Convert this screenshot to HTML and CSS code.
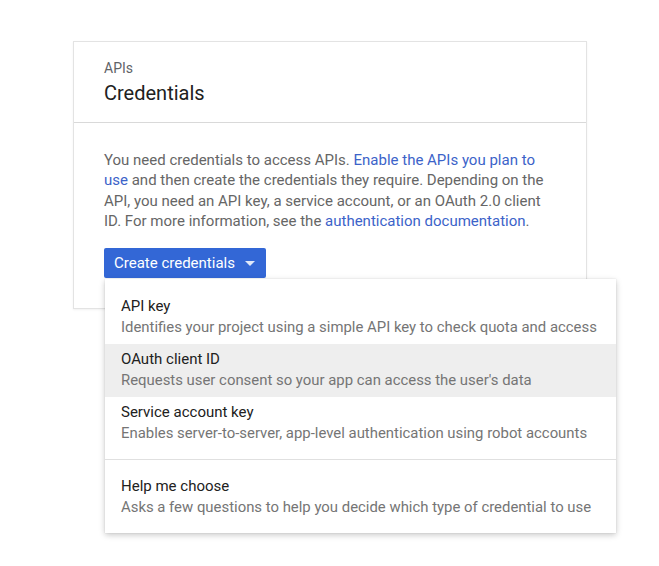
FILE: index.html
```html
<!DOCTYPE html>
<html>
<head>
<meta charset="utf-8">
<link rel="stylesheet" href="styles.css">
</head>
<body>
<div class="card">
  <div class="card-head">
    <div class="eyebrow">APIs</div>
    <div class="title">Credentials</div>
  </div>
  <div class="card-body">
    <p class="intro">You need credentials to access APIs. <a href="#">Enable the APIs you plan to use</a> and then create the credentials they require. Depending on the API, you need an API key, a service account, or an OAuth 2.0 client ID. For more information, see the <a href="#">authentication documentation</a>.</p>
    <div class="dropdown">
      <button class="btn">Create credentials <span class="caret"></span></button>
      <div class="menu">
        <div class="item">
          <div class="item-title">API key</div>
          <div class="item-desc">Identifies your project using a simple API key to check quota and access</div>
        </div>
        <div class="item active">
          <div class="item-title">OAuth client ID</div>
          <div class="item-desc">Requests user consent so your app can access the user's data</div>
        </div>
        <div class="item">
          <div class="item-title">Service account key</div>
          <div class="item-desc">Enables server-to-server, app-level authentication using robot accounts</div>
        </div>
        <div class="sep"></div>
        <div class="item">
          <div class="item-title">Help me choose</div>
          <div class="item-desc">Asks a few questions to help you decide which type of credential to use</div>
        </div>
      </div>
    </div>
  </div>
</div>
</body>
</html>
```
FILE: styles.css
```css
html, body {
  margin: 0;
  padding: 0;
  background: #ffffff;
}
html {
  min-height: 566px;
}
body {
  min-height: 566px;
  box-sizing: border-box;
  font-family: Roboto, "Liberation Sans", Arial, sans-serif;
  padding: 41px 0 0 73px;
}
.card {
  width: 512px;
  height: 266px;
  border: 1px solid #e3e3e3;
  box-shadow: 0 1px 2px rgba(0,0,0,0.06);
  background: #fff;
}
.card-head {
  height: 81px;
  padding: 0 30px;
  border-bottom: 1px solid #d9d9d9;
  box-sizing: border-box;
}
.eyebrow {
  font-size: 14px;
  line-height: 16px;
  color: #5f6368;
  padding-top: 18px;
}
.title {
  font-size: 20px;
  line-height: 26px;
  color: #212121;
  padding-top: 4px;
}
.card-body {
  padding: 27px 30px 0;
}
.intro {
  margin: 0;
  font-size: 15px;
  line-height: 20.3px;
  color: #666666;
}
.intro a {
  color: #3c63c9;
  text-decoration: none;
}
.dropdown {
  position: relative;
  margin-top: 17px;
}
.btn {
  display: flex;
  align-items: center;
  height: 30px;
  width: 162px;
  padding: 0 0 0 10px;
  border: none;
  border-radius: 2px;
  background: #3367d6;
  color: #fff;
  font-family: inherit;
  font-size: 15px;
  cursor: pointer;
}
.caret {
  display: inline-block;
  margin-left: 10px;
  width: 0;
  height: 0;
  border-left: 5px solid transparent;
  border-right: 5px solid transparent;
  border-top: 5px solid #ffffff;
  opacity: 0.85;
}
.menu {
  position: absolute;
  left: 1px;
  top: 31px;
  width: 511px;
  padding: 12px 0 9px;
  background: #fff;
  box-shadow: 0 2px 6px rgba(0,0,0,0.22), 0 0 1px rgba(0,0,0,0.15);
  box-sizing: border-box;
}
.item {
  padding: 5px 16px 7px;
  height: 53px;
  box-sizing: border-box;
}
.item.active {
  background: #eeeeee;
}
.item-title {
  font-size: 15px;
  line-height: 21px;
  color: #212121;
  white-space: nowrap;
}
.item-desc {
  font-size: 14.9px;
  line-height: 21px;
  color: #757575;
  white-space: nowrap;
}
.sep {
  height: 1px;
  background: #e0e0e0;
  margin: 9px 0 11px;
}
```
